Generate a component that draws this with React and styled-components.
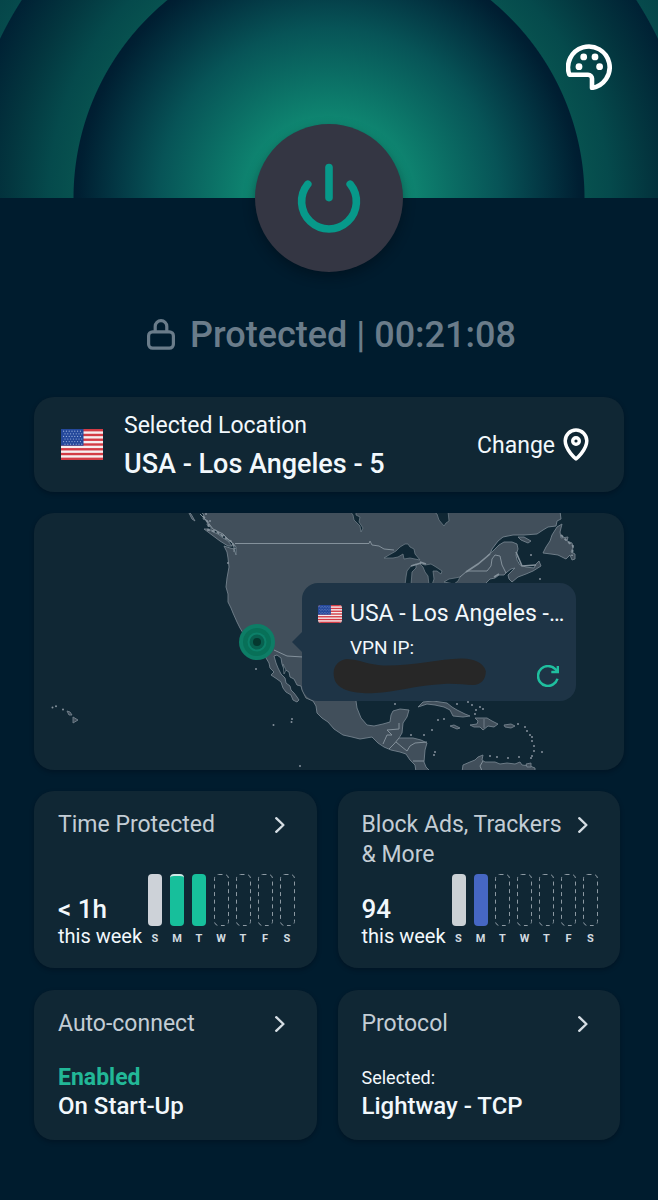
import React from 'react'
import styled, { createGlobalStyle } from 'styled-components'

const GlobalStyle = createGlobalStyle`
    *{
        box-sizing: border-box;
    }
    body{
        margin: 0;
        background: #001c2e;
        color: #f2f8fc;
        font-family: Roboto, "Liberation Sans", sans-serif;
    }
    button{
        margin: 0;
        padding: 0;
        border: none;
        background: none;
        color: inherit;
        font: inherit;
        cursor: pointer;
    }
    svg{
        display: block;
        flex-shrink: 0;
    }
`

const DAYS = ['S', 'M', 'T', 'W', 'T', 'F', 'S']

function PaletteIcon() {
  return (
    <svg width="46" height="46" viewBox="0 0 46 46" fill="none">
      <path d="M3.4 30.7A20.8 20.8 0 1 1 26 43.9V35a4 4 0 0 0-4-4.3Z" stroke="#fff" strokeWidth="4.6" strokeLinejoin="round" />
      <g fill="#fff">
        <circle cx="13" cy="22.7" r="3.4" />
        <circle cx="17.7" cy="12.9" r="3.4" />
        <circle cx="29" cy="12.9" r="3.4" />
        <circle cx="33.6" cy="22.7" r="3.4" />
      </g>
    </svg>
  )
}

function PowerIcon() {
  return (
    <svg width="64" height="72" viewBox="0 0 64 72" fill="none" stroke="#07998a" strokeWidth="7.6" strokeLinecap="round">
      <path d="M32 5.6V35.6" />
      <path d="M10.8 22.2A27.4 27.4 0 1 0 53.2 22.2" />
    </svg>
  )
}

function LockIcon() {
  return (
    <svg width="28" height="31" viewBox="0 0 28 31" fill="none" stroke="#6a7c8a" strokeWidth="3.2">
      <rect x="1.6" y="12.8" width="24.8" height="16.4" rx="4" />
      <path d="M8.2 12.8V7.4a5.8 5.8 0 0 1 11.6 0V12.8" />
    </svg>
  )
}

function PinIcon() {
  return (
    <svg width="26" height="34" viewBox="0 0 26 34" fill="none" stroke="#fff">
      <path d="M13 31C13 31 2.2 22 2.2 12.8A10.8 10.8 0 0 1 23.8 12.8C23.8 22 13 31 13 31Z" strokeWidth="3.5" strokeLinejoin="round" />
      <circle cx="13" cy="13" r="3.3" strokeWidth="3.4" />
    </svg>
  )
}

function ChevronIcon() {
  return (
    <svg width="12" height="18" viewBox="0 0 12 18" fill="none" stroke="#d5dde3" strokeWidth="2.4" strokeLinecap="round" strokeLinejoin="round">
      <path d="M2.2 2.2L9.4 9L2.2 15.8" />
    </svg>
  )
}

function RefreshIcon() {
  return (
    <svg width="22" height="22" viewBox="2 2 20 20" fill="none" stroke="#1fbf9f" strokeWidth="2.3">
      <path d="M20.6 14.5A9 9 0 1 1 12 3C14.5 3 16.9 4 18.7 5.7L20.6 7.8" />
      <path d="M21 3V8.4H15" />
    </svg>
  )
}

function Flag({ width, height, radius }) {
  const stars = []
  for (let row = 0; row < 6; row++) {
    for (let col = 0; col < 7; col++) {
      stars.push(<circle key={row + '-' + col} cx={2.6 + col * 2.8 + (row % 2 ? 1.4 : 0)} cy={2.2 + row * 2.6} r="0.6" />)
    }
  }
  return (
    <FlagBox $radius={radius}>
      <svg width={width} height={height} viewBox="0 0 42 31" preserveAspectRatio="none">
        <rect width="42" height="31" fill="#f6eef0" />
        {[0, 2, 4, 6, 8, 10, 12].map((i) => (
          <rect key={i} y={i * 2.385} width="42" height="2.385" fill="#d33b45" />
        ))}
        <rect width="22.5" height="16.7" fill="#24489b" />
        <g fill="#9db3dc">{stars}</g>
      </svg>
    </FlagBox>
  )
}

const ISLANDS = [
  [52.5, 707.5], [56, 706.3], [63, 709.5], [256, 669], [273.5, 725], [291.5, 722], [292, 719], [300, 766],
  [395, 704], [432, 730], [435, 752], [434, 755], [438, 720], [444, 719], [468, 702], [472, 705], [476, 710],
  [480, 707], [483, 709], [475, 714], [518, 724], [525, 727], [527, 731], [530, 735], [532, 737], [532, 741],
  [534, 746], [534, 751], [532, 756], [531, 758], [542, 752], [490, 756], [497, 757], [508, 758], [519, 757],
  [540, 579], [531, 555], [228, 563], [206, 514], [210, 521], [424, 735], [411, 735], [457, 704],
]

function MapDrawing() {
  return (
    <MapSvg viewBox="34 513 590 257" role="img" aria-label="Map of North America">
      <g fill="#414f5b" stroke="#74828d" strokeWidth="0.9" strokeLinejoin="round">
        <path
          d="M200 511L204 515L203 519L208 521L207 525L211 527L211 531L216 530L219 534L225 536L228 540L233 543L236 547L236 555
          L234 549L230 548L224 546L227 552L228 558L229 567L227 578L226 587L228 594L228 602L231 608L233 613L237 622L240 628L243 633L250 640
          L256 643L262 650L266 658L269 663L270 668L274 672L271 675L277 679L281 682L283 688L286 692L291 695L293 700L297 702L299 700
          L297 697L294 693L291 690L290 686L286 683L285 678L281 674L278 668L276 663L274 656L277 655L281 658L282 664L284 669
          L289 672L290 677L294 679L297 685L301 686L302 690L306 698L313 701L316 706L317 713L322 718L328 722L334 729L343 735L352 737
          L360 739L366 738L372 737L378 743L384 747L391 750L400 752L406 754L410 760L415 765L416 772L431 772L426 767L424 762
          L425 750L427 743L421 740L413 738L403 738L399 738L402 733L403 723L407 717L409 710L400 709L393 711L391 715L390 722L383 724
          L374 726L367 725L361 718L357 708L356 701L360 680L400 668L415 665L430 690L436 680L430 660L450 640L470 600L486 583
          L490 579L495 578L499 575L504 575L507 572L511 569L515 568L508 575L509 579L512 582L518 577L526 574L533 571L541 566L539 561L536 564
          L534 568L526 567L520 565L517 560L516 555L518 549L517 544L512 542L504 542L499 545L493 551L487 556L490 554L492 549L498 541L503 537
          L513 535L524 535L537 534L543 530L548 527L556 526L557 521L561 519L560 511Z"
        />
        <path d="M557 527L562 524L560 532L561 538L568 537L567 541L572 543L573 548L571 552L575 554L575 559L572 560L570 555L566 559L562 557L558 555L551 554L543 553L546 547L550 541L552 535Z" />
        <path d="M204 529L209 529L213 532L218 534L223 538L228 541L232 546L228 546L220 541L212 535Z" />
        <path d="M188 511L191 514L195 521L192 519Z" />
        <path d="M518 537L524 537L531 541L528 543L521 540Z" />
        <path d="M418 707L423 702L433 701L447 703L452 707L457 710L465 714L470 716L463 717L453 716L450 710L444 707L435 705L427 704Z" />
        <path d="M470 725L477 724L478 721L475 718L482 718L487 718L492 721L498 724L494 727L488 726L483 730L480 727L474 727Z" />
        <path d="M450 726L454 725L460 728L457 729Z" />
        <path d="M504 725L511 724L515 726L511 728L505 727Z" />
        <path d="M462 772L463 765L470 762L475 760L478 757L483 755L482 760L485 762L495 762L500 764L507 763L515 764L520 762L522 765L530 766L535 768L535 772Z" />
        <path d="M526 764L531 763L531 767L527 767Z" />
        <path d="M67 711L70 712L72 715L69 715Z" />
        <path d="M73 717L78 720L73 723Z" />
        <path d="M484 719V728" />
      </g>
      <g fill="#102734" stroke="#74828d" strokeWidth="0.7" strokeLinejoin="round">
        <path d="M433 511L437 514L439 520L444 526L446 523L449 521L448 511Z" />
        <path d="M350 511L353 515L354 520L360 526L361 532L363 528L359 522L360 517L356 515L356 511Z" />
        <path d="M384 558L389 555L396 551L400 547L405 544L408 544L410 547L414 549L415 554L420 560L415 559L410 558L404 559L403 554L398 557L393 558Z" />
        <path d="M405 585L406 577L407 571L411 566L416 564L416 568L412 572L411 585Z" />
        <path d="M419 563L425 565L431 564L436 567L442 571L441 574L437 571L433 571L434 579L432 585H429L428 576L425 572L423 567Z" />
        <path d="M444 582L449 579L455 578L460 577L458 581L454 584Z" />
        <path d="M283 664L286 670L284 674Z" />
      </g>
      <g fill="none" stroke="#84919b" strokeWidth="1">
        <path d="M235 543.5H369L370 541L372 545L379 546L384 549L394 550" />
        <path d="M460 577L467 571L487 571L491 566L492 559L495 555L500 556L502 565L506 573" />
        <path d="M466 572L478 564L490 554" strokeWidth="1.6" />
        <path d="M274 650L287 656L303 657" />
        <path d="M383 744L387 735L392 735L387 730L399 729V723" />
        <path d="M399 738L394 744L389 749M396 742L402 747L407 751L410 746L415 743L427 742M413 761H424M483 761L480 766L482 771M200 514L207 521L213 529L223 534L234 545V552" />
        <path d="M494 577L499 574M516 552L522 566L536 565M420 562L426 564M411 566L421 563" strokeWidth="1.6" />
        <path d="M203 516L209 524L208 530L217 532L224 537L232 542L235 549" strokeWidth="1.8" strokeDasharray="3 2" />
        <path d="M561 535L567 541L573 546L572 556" strokeWidth="1.8" strokeDasharray="3 2" />
      </g>
      <g fill="#84919b">
        {ISLANDS.map(([x, y]) => (
          <circle key={x + ',' + y} cx={x} cy={y} r="1" />
        ))}
      </g>
      <circle cx="257" cy="642" r="18" fill="#0d7d66" />
      <circle cx="257" cy="642" r="14" fill="#087058" />
      <circle cx="257" cy="642" r="9.5" fill="#0c8069" />
      <circle cx="257" cy="642" r="7.5" fill="#08604f" />
      <circle cx="257" cy="642" r="4" fill="#05382f" />
    </MapSvg>
  )
}

function WeekChart({ bars }) {
  return (
    <Chart>
      {DAYS.map((day, i) => (
        <Day key={i}>
          {bars[i] ? (
            <Bar $color={bars[i].color} $cap={bars[i].cap} />
          ) : (
            <svg width="15" height="52" viewBox="0 0 15 52" fill="none">
              <rect x="0.5" y="0.5" width="14" height="51" rx="4" stroke="#8c99a2" strokeDasharray="4 3.6" />
            </svg>
          )}
          <DayLabel>{day}</DayLabel>
        </Day>
      ))}
    </Chart>
  )
}

function StatCard({ title, value, bars }) {
  return (
    <Tile $height={177}>
      <TileHead>
        <TileTitle>{title}</TileTitle>
        <ChevronIcon />
      </TileHead>
      <StatBody>
        <span>
          <StatValue>{value}</StatValue>
          <StatPeriod>this week</StatPeriod>
        </span>
        <WeekChart bars={bars} />
      </StatBody>
    </Tile>
  )
}

function SettingCard({ title, children }) {
  return (
    <Tile $height={150}>
      <TileHead>
        <TileTitle>{title}</TileTitle>
        <ChevronIcon />
      </TileHead>
      <SettingBody>{children}</SettingBody>
    </Tile>
  )
}

function App() {
  return (
    <Page>
      <GlobalStyle />
      <Hero>
        <button aria-label="Change theme">
          <PaletteIcon />
        </button>
      </Hero>
      <Content>
        <PowerButton aria-label="Disconnect">
          <PowerIcon />
        </PowerButton>
        <Status>
          <LockIcon />
          <StatusText>Protected | 00:21:08</StatusText>
        </Status>
        <LocationCard>
          <Flag width={42} height={31} radius={0} />
          <LocationText>
            <LocationLabel>Selected Location</LocationLabel>
            <LocationName>USA - Los Angeles - 5</LocationName>
          </LocationText>
          <ChangeButton>
            Change
            <PinIcon />
          </ChangeButton>
        </LocationCard>
        <MapCard>
          <MapDrawing />
          <Callout>
            <Flag width={24} height={18} radius={3} />
            <CalloutTitle>USA - Los Angeles -…</CalloutTitle>
            <CalloutLabel>VPN IP:</CalloutLabel>
            <CalloutFoot>
              <svg width="154" height="36" viewBox="0 0 154 36">
                <path
                  d="M1 19C-1 9 5 2 14 1C28 2 36 7 50 7.4C80 8 105 1 128 0.4C141 0 151 5 152.8 13C153 21 148 27 140 27C130 26.6 120 24.6 104 26.4C82 28 62 33.6 42 35C26 36 3 34 1 19Z"
                  fill="#272727"
                />
              </svg>
              <button aria-label="Refresh IP">
                <RefreshIcon />
              </button>
            </CalloutFoot>
          </Callout>
        </MapCard>
        <Tiles>
          <StatCard
            title="Time Protected"
            value="< 1h"
            bars={[{ color: '#cdd2d8' }, { color: '#17bf9b', cap: true }, { color: '#17bf9b' }]}
          />
          <StatCard
            title="Block Ads, Trackers & More"
            value="94"
            bars={[{ color: '#cbd1d5' }, { color: '#4667c4' }]}
          />
          <SettingCard title="Auto-connect">
            <SettingState>Enabled</SettingState>
            <SettingValue>On Start-Up</SettingValue>
          </SettingCard>
          <SettingCard title="Protocol">
            <SettingNote>Selected:</SettingNote>
            <SettingValue>Lightway - TCP</SettingValue>
          </SettingCard>
        </Tiles>
      </Content>
    </Page>
  )
}

const Page = styled.main`
    min-height: 100vh;
    padding-bottom: 60px;
    overflow: hidden;
`
const Hero = styled.header`
    display: flex;
    justify-content: flex-end;
    align-items: flex-start;
    height: 198px;
    padding: 44px 46px;
    background:
        radial-gradient(circle at 50% 100%, #0f8d75 0, #0f8872 75px, #0b6f65 120px, #075457 170px, #033643 215px, #001f32 250px, #001d31 255px, transparent 256px),
        radial-gradient(circle at 50% 100%, #07514f 256px, #054a4c 280px, #03363f 320px, #002134 365px, transparent 366px),
        radial-gradient(circle at 50% 100%, #064a4c 366px, #033c44 420px);
`
const Content = styled.div`
    display: flex;
    flex-direction: column;
    padding: 0 34px;
`
const PowerButton = styled.button`
    display: flex;
    align-items: center;
    justify-content: center;
    align-self: center;
    && {
        width: 148px;
        height: 148px;
        margin-top: -74px;
        border-radius: 50%;
        background: #343643;
        box-shadow: 0 5px 12px rgba(0, 10, 20, 0.45);
    }
`
const Status = styled.div`
    display: flex;
    align-items: center;
    justify-content: center;
    gap: 15px;
    margin: 38px 0;
    padding-left: 5px;
`
const StatusText = styled.h1`
    margin: 0;
    padding-top: 2px;
    color: #6a7c8a;
    font-size: 36px;
    font-weight: 500;
    line-height: 47px;
`
const Card = styled.section`
    border-radius: 20px;
    background: #102734;
    box-shadow: 0 2px 4px rgba(0, 10, 20, 0.35);
`
const LocationCard = styled(Card)`
    display: flex;
    align-items: center;
    height: 95px;
    padding: 0 35px 0 27px;
`
const FlagBox = styled.span`
    flex-shrink: 0;
    border-radius: ${(props) => props.$radius}px;
    overflow: hidden;
`
const LocationText = styled.div`
    flex: 1;
    margin-left: 21px;
    line-height: 39px;
`
const LocationLabel = styled.div`
    font-size: 23px;
`
const LocationName = styled.div`
    font-size: 27px;
    font-weight: 500;
`
const ChangeButton = styled.button`
    display: flex;
    align-items: center;
    gap: 8px;
    && {
        padding-top: 1px;
        font-size: 23px;
    }
`
const MapCard = styled(Card)`
    position: relative;
    margin: 21px 0;
`
const MapSvg = styled.svg`
    width: 100%;
    border-radius: 20px;
`
const Callout = styled.div`
    position: absolute;
    top: 70px;
    right: 48px;
    display: grid;
    grid-template-columns: 24px 1fr;
    column-gap: 8px;
    align-items: center;
    width: 274px;
    height: 118px;
    padding: 16px 10px 7px 16px;
    border-radius: 16px;
    background: #1e3446;
    &::before{
        content: "";
        position: absolute;
        top: 48px;
        left: -10px;
        border: 11px solid transparent;
        border-left-width: 0;
        border-right-color: #1e3446;
    }
`
const CalloutTitle = styled.div`
    font-size: 23px;
    line-height: 30px;
    white-space: nowrap;
`
const CalloutLabel = styled.div`
    grid-column: 2;
    font-size: 19px;
    line-height: 38px;
`
const CalloutFoot = styled.div`
    grid-column: 1 / 3;
    display: flex;
    align-items: center;
    justify-content: space-between;
    margin-top: -9px;
    padding: 0 7px 0 15px;
`
const Tiles = styled.div`
    display: grid;
    grid-template-columns: 1fr 1fr;
    gap: 22px 21px;
    padding-right: 4px;
`
const Tile = styled.button`
    display: flex;
    flex-direction: column;
    justify-content: space-between;
    && {
        min-height: ${(props) => props.$height}px;
        padding: 19px 22px 20px 24px;
        border-radius: 20px;
        background: #102734;
        box-shadow: 0 2px 4px rgba(0, 10, 20, 0.35);
        text-align: left;
    }
`
const TileHead = styled.span`
    display: flex;
    justify-content: space-between;
    width: 100%;
    padding-right: 9px;
    svg{
        margin-top: 6px;
    }
`
const TileTitle = styled.span`
    color: #c3cdd5;
    font-size: 23px;
    line-height: 30px;
`
const StatBody = styled.span`
    display: flex;
    align-items: flex-end;
    justify-content: space-between;
    width: 100%;
    white-space: nowrap;
`
const StatValue = styled.span`
    display: block;
    font-size: 26px;
    font-weight: 500;
    line-height: 30px;
`
const StatPeriod = styled.span`
    display: block;
    font-size: 20px;
    line-height: 24px;
`
const Chart = styled.span`
    display: flex;
    gap: 7px;
    padding-bottom: 2px;
`
const Day = styled.span`
    display: flex;
    flex-direction: column;
    align-items: center;
    gap: 6px;
    width: 15px;
`
const Bar = styled.span`
    width: 14px;
    height: 52px;
    border-radius: 4px;
    border-top: ${(props) => (props.$cap ? '2px solid #cfe9e6' : 'none')};
    background: ${(props) => props.$color};
`
const DayLabel = styled.span`
    color: #d3dbe0;
    font-size: 11px;
    font-weight: 700;
    line-height: 14px;
`
const SettingBody = styled.span`
    display: flex;
    flex-direction: column;
    line-height: 28px;
`
const SettingState = styled.span`
    color: #22b797;
    font-size: 23px;
    font-weight: 700;
`
const SettingNote = styled.span`
    font-size: 18px;
`
const SettingValue = styled.span`
    font-size: 24px;
    font-weight: 500;
`

export default App
